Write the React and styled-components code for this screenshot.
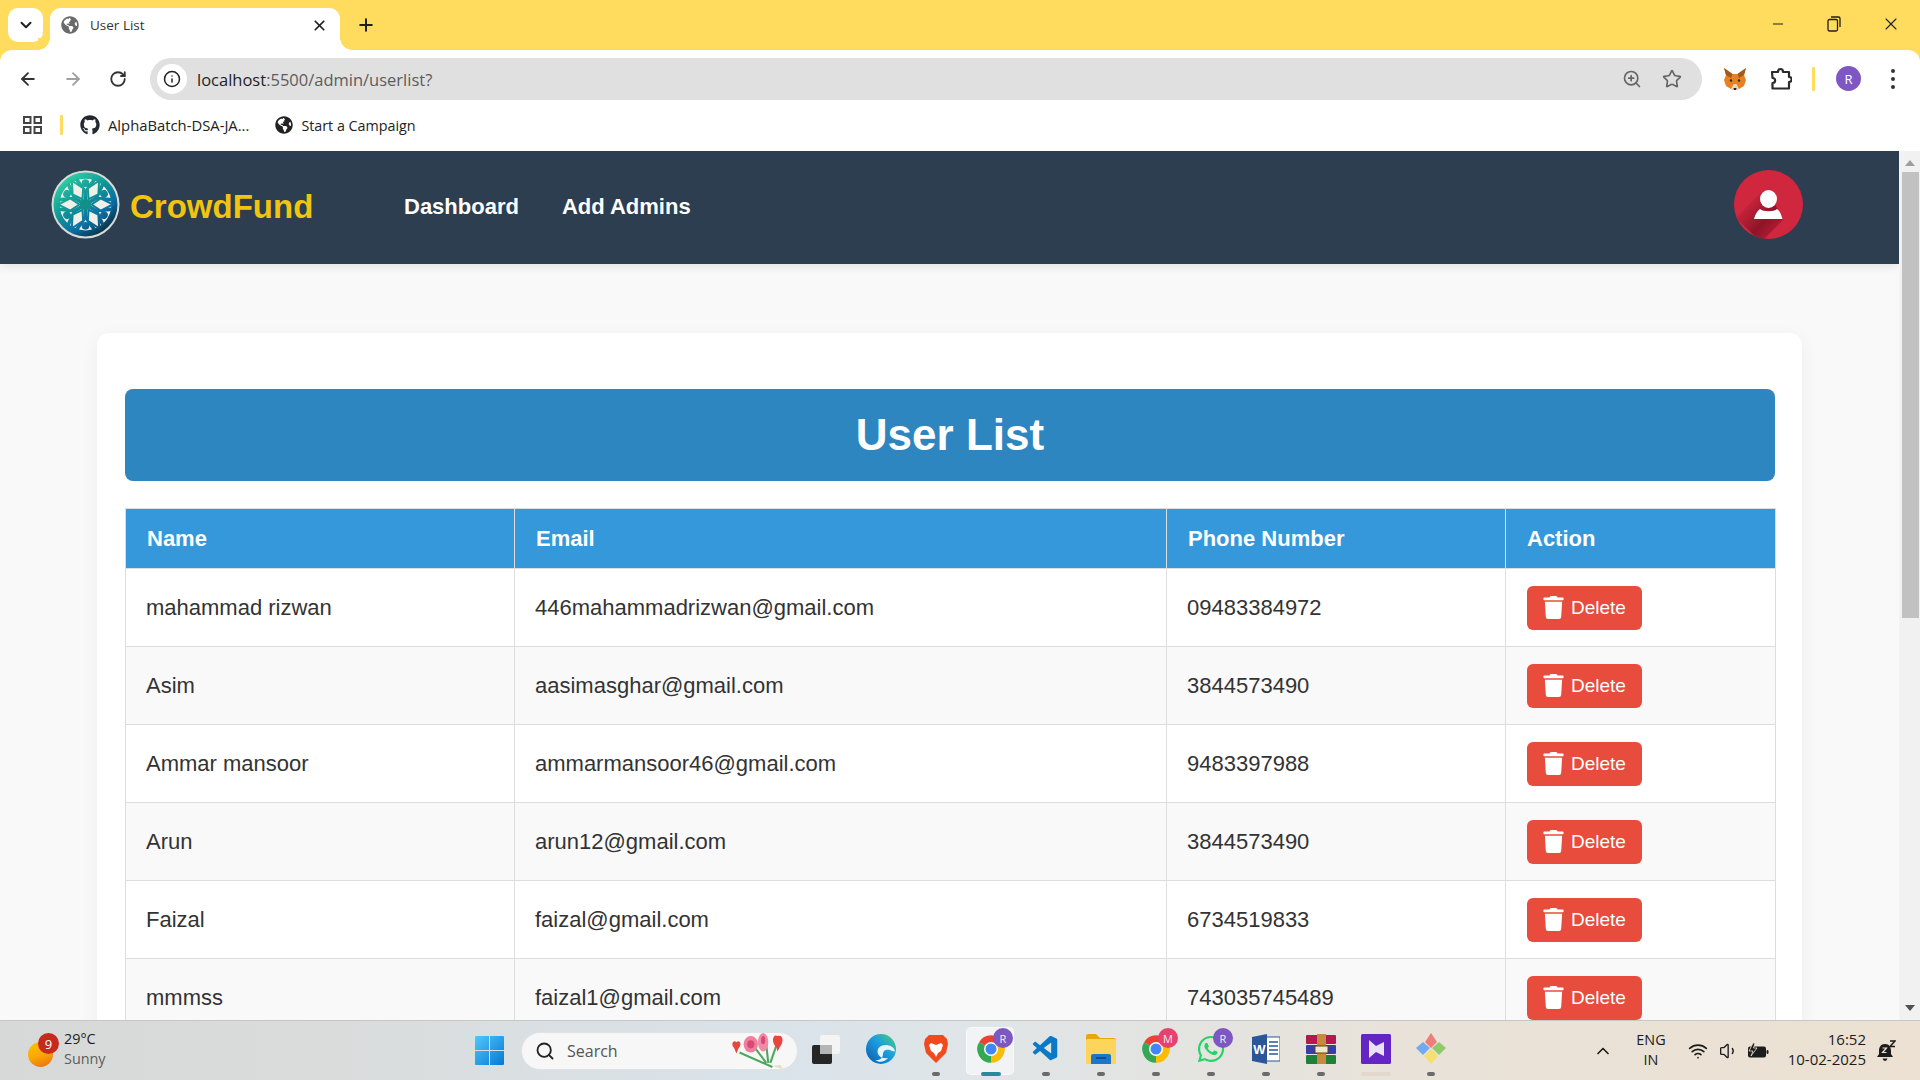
import React from "react";
import styled, { createGlobalStyle } from "styled-components";
import { ArrowLeft, ArrowRight, RotateCw, Info, ZoomIn, Star, X, Plus, ChevronDown, ChevronUp, Minus, Wifi, Volume1, Search } from "lucide-react";
import { FaGithub, FaGlobeAmericas, FaTrash, FaWhatsapp } from "react-icons/fa";
import { VscVscode } from "react-icons/vsc";

const Global = createGlobalStyle`
  html, body { margin: 0; padding: 0; overflow: hidden; background: #f9f9f9; }
  * { box-sizing: border-box; }
`;

const UI_FONT = `"Open Sans", "Noto Sans", sans-serif`;
const WEB_FONT = `"Liberation Sans", Arial, sans-serif`;

const Screen = styled.div`
  width: 1920px; height: 1080px; display: flex; flex-direction: column; overflow: hidden;
  font-family: ${UI_FONT}; background: #ffdc5d;
`;

/* Tab strip */
const TabStrip = styled.div`
  height: 50px; flex: none; display: flex; align-items: flex-start; background: #ffdc5d; padding: 8px 0 0 8px; color: #1f1f1f;
`;
const TabSearch = styled.div`
  width: 35px; height: 34px; background: #fff; border-radius: 10px; display: flex; align-items: center; justify-content: center; margin-right: 7px;
`;
const Tab = styled.div`
  position: relative; width: 290px; height: 42px; background: #fff; border-radius: 11px 11px 0 0; display: flex; align-items: center; padding: 0 12px 8px 11px;
  &::before, &::after { content: ""; position: absolute; bottom: 0; width: 12px; height: 12px; }
  &::before { left: -12px; background: radial-gradient(circle at 0 0, #ffdc5d 11.5px, #fff 12px); }
  &::after { right: -12px; background: radial-gradient(circle at 100% 0, #ffdc5d 11.5px, #fff 12px); }
`;
const TabTitle = styled.span`
  font-size: 13.5px; margin-left: 11px; flex: 1; color: #333; white-space: nowrap;
`;
const NewTab = styled.div`
  width: 30px; height: 34px; margin-left: 11px; display: flex; align-items: center; justify-content: center;
`;
const WindowControls = styled.div`
  margin-left: auto; margin-top: -8px; height: 50px; display: flex; align-items: center; padding-bottom: 2px;
`;
const WinBtn = styled.div`
  width: ${p => p.$w}px; display: flex; justify-content: center; align-items: center;
`;

/* Toolbar */
const Toolbar = styled.div`
  height: 58px; flex: none; background: #fff; border-radius: 12px 12px 0 0; display: flex; align-items: flex-start; padding: 8px 0 0 5px;
`;
const NavBtn = styled.div`
  width: 45px; height: 42px; display: flex; align-items: center; justify-content: center; color: ${p => p.$off ? "#a0a0a0" : "#333"};
`;
const Omnibox = styled.div`
  width: 1552px; height: 42px; margin-left: 10px; border-radius: 21px; background: #e0e0e0; display: flex; align-items: center; padding: 0 18px 0 7px;
`;
const InfoChip = styled.div`
  width: 30px; height: 30px; border-radius: 50%; background: #fff; display: flex; align-items: center; justify-content: center; flex: none;
`;
const Url = styled.div`
  margin-left: 10px; font-size: 16.5px; color: #5c5c5c; flex: 1; white-space: nowrap;
  b { font-weight: 400; color: #1f1f1f; }
`;
const OmniIcon = styled.div`
  width: 24px; margin-left: ${p => p.$ml || 0}px; display: flex; justify-content: center; color: #666;
`;
const ExtBtn = styled.div`
  width: 46px; height: 42px; margin-left: ${p => p.$ml || 0}px; display: flex; align-items: center; justify-content: center;
`;
const YellowSep = styled.div`
  width: 3px; height: ${p => p.$h}px; background: #ffdc5d; border-radius: 1px; margin-left: ${p => p.$ml}px; margin-top: ${p => p.$mt || 0}px; flex: none;
`;
const ProfileDot = styled.div`
  width: 25px; height: 25px; margin: 8px 0 0 21px; border-radius: 50%; background: #7e57c2; color: #fff; font-size: 13px; display: flex; align-items: center; justify-content: center; flex: none;
`;
const Kebab = styled.div`
  width: 24px; margin: 8px 0 0 20px; height: 25px; display: flex; flex-direction: column; align-items: center; justify-content: center; gap: 4px;
  i { width: 4px; height: 4px; border-radius: 50%; background: #333; display: block; }
`;

/* Bookmarks */
const Bookmarks = styled.div`
  height: 43px; flex: none; background: #fff; display: flex; align-items: center; padding: 0 0 9px 23px; color: #1f1f1f;
`;
const Mark = styled.div`
  display: flex; align-items: center; margin-left: ${p => p.$ml}px; gap: 8px; font-size: ${p => p.$fs}px; white-space: nowrap; color: #222;
`;

/* Viewport */
const Viewport = styled.div`
  flex: 1; min-height: 0; display: flex; background: #f9f9f9;
`;
const Page = styled.div`
  flex: 1; min-width: 0; overflow: hidden; font-family: ${WEB_FONT}; color: #333;
`;
const Scrollbar = styled.div`
  width: 21px; flex: none; background: #f1f1f1; padding: 0 2px; display: flex; flex-direction: column; align-items: center; border-left: 1px solid #f5f5f5;
`;
const ScrollArrow = styled.div`
  width: 0; height: 0; border-left: 5px solid transparent; border-right: 5px solid transparent; flex: none;
  ${p => p.$up ? "border-bottom: 6px solid #9e9e9e; margin-top: 9px;" : "border-top: 6px solid #505050; margin-top: auto; margin-bottom: 9px;"}
`;
const ScrollThumb = styled.div`
  width: 17px; height: 446px; background: #c1c1c1; margin-top: 6px; flex: none;
`;

const Nav = styled.nav`
  height: 113px; background: #2c3e50; display: flex; align-items: center; padding: 0 96px 7px 51px; box-shadow: 0 2px 10px rgba(0,0,0,.1);
`;
const Brand = styled.div`
  display: flex; align-items: center; gap: 10px; width: 353px; font-size: 33px; font-weight: 700; color: #f1c40f;
`;
const BrandName = styled.span`
  margin-top: 5px;
`;
const NavLink = styled.a`
  color: #fff; font-weight: 700; font-size: 22px; margin-right: 43px; margin-top: 5px;
`;
const AvatarWrap = styled.div`
  margin-left: auto; width: 69px; height: 69px; flex: none;
`;

const Card = styled.section`
  margin: 69px 97px 0; background: #fff; border-radius: 12px; padding: 56px 27px 0 28px; box-shadow: 0 4px 20px rgba(0,0,0,.05);
`;
const Title = styled.h1`
  margin: 0 0 27px; height: 92px; border-radius: 8px; background: #2e86c1; color: #fff; font-size: 44px; font-weight: 700; display: flex; align-items: center; justify-content: center;
`;
const Table = styled.table`
  width: 1650px; table-layout: fixed; border-collapse: collapse; font-size: 22px;
`;
const Th = styled.th`
  background: #3498db; color: #fff; text-align: left; font-weight: 700; font-size: 22px; height: 60px; padding: 0 20px 0 21px; border: 1px solid #ddd;
`;
const Tr = styled.tr`
  background: ${p => p.$even ? "#f9f9f9" : "#fff"};
`;
const Td = styled.td`
  height: 78px; padding: 0 20px; border: 1px solid #ddd; color: #333;
`;
const DeleteBtn = styled.button`
  width: 115px; height: 44px; margin-left: 1px; border: 0; border-radius: 6px; background: #e74c3c; color: #fff; font: 400 19px ${WEB_FONT}; display: flex; align-items: center; gap: 6px; padding: 0 0 0 15px;
`;

/* Taskbar */
const Taskbar = styled.footer`
  height: 60px; flex: none; display: flex; align-items: center; border-top: 1px solid #c6c6c6; color: #1c1c1c;
  background: linear-gradient(90deg, #d7d9d9 0%, #dadcdc 18%, #d9e3ea 40%, #dfe5e8 50%, #e9e2d8 75%, #ece1d2 100%);
`;
const Weather = styled.div`
  width: 475px; flex: none; padding-left: 28px; display: flex; align-items: center; height: 100%;
`;
const Sun = styled.div`
  position: relative; width: 25px; height: 25px; border-radius: 50%; background: linear-gradient(160deg, #ffc400 0%, #fba806 50%, #e96a12 100%); margin-top: 8px; flex: none;
`;
const SunBadge = styled.span`
  position: absolute; left: 10px; top: -9px; width: 21px; height: 21px; border-radius: 50%; background: #c42b1c; color: #fff; font-size: 13px; display: flex; align-items: center; justify-content: center;
`;
const WeatherText = styled.div`
  margin-left: 11px; font-size: 14.4px; line-height: 20px; padding-bottom: 3px;
  span { display: block; }
  span + span { color: #5d5d5d; }
`;
const StartBtn = styled.div`
  width: 29px; height: 29px; flex: none; margin-right: 17px; display: flex;
`;
const SearchBox = styled.div`
  width: 277px; height: 38px; border-radius: 19px; background: #f7f7f7; border: 1px solid #e2e2e2; flex: none; display: flex; align-items: center; padding: 0 10px 0 13px;
  span { margin-left: 12px; font-size: 16px; color: #555; flex: 1; }
`;
const Pinned = styled.div`
  display: flex; flex: none; align-items: center; height: 100%;
`;
const Pin = styled.div`
  position: relative; width: 55px; height: 100%; display: flex; align-items: center; justify-content: center; padding-bottom: 3px;
  ${p => p.$active && `&::before { content: ""; position: absolute; left: 3px; right: 4px; top: 6px; bottom: 5px; border-radius: 5px; background: rgba(255,255,255,.55); border: 1px solid rgba(255,255,255,.5);} `}
  > * { position: relative; }
`;
const Indicator = styled.i`
  position: absolute !important; left: 50%; bottom: 4px; transform: translateX(-50%); height: 4px; border-radius: 2px;
  width: ${p => p.$w || 8}px; background: ${p => p.$c || "#6a6a6a"};
`;
const Bubble = styled.b`
  position: absolute !important; top: 7px; left: 30px; width: 20px; height: 20px; border-radius: 50%; background: ${p => p.$c}; color: #eee; font: 400 11px ${UI_FONT}; display: flex; align-items: center; justify-content: center;
`;
const Tray = styled.div`
  margin-left: auto; display: flex; align-items: center; padding-right: 24px; height: 100%;
`;
const TrayIcon = styled.div`
  width: ${p => p.$w}px; margin-left: ${p => p.$ml}px; display: flex; justify-content: center; align-items: center; flex: none;
`;
const Lang = styled.div`
  width: 40px; margin-left: 18px; text-align: center; font-size: 14.4px; line-height: 20px; padding-bottom: 2px;
`;
const Clock = styled.div`
  width: 90px; margin-left: 7px; text-align: right; font-size: 15px; line-height: 20px; white-space: nowrap; padding-bottom: 3px;
`;

/* Drawings */
const Logo = () => (
  <svg width="69" height="69" viewBox="0 0 68 68">
    <defs>
      <linearGradient id="lg" x1="0.1" y1="0.05" x2="0.8" y2="1">
        <stop offset="0" stopColor="#2fd2a5" /><stop offset=".45" stopColor="#0f9296" /><stop offset=".7" stopColor="#0b6fa5" /><stop offset="1" stopColor="#0c2f42" />
      </linearGradient>
      <mask id="starMask">
        <rect width="68" height="68" fill="#000" />
        {[0, 60, 120, 180, 240, 300].map(a => (
          <g key={a} transform={`rotate(${a} 34 34)`}>
            <path d="M34 34 L34 22 M34 22 L25 9 M34 22 L43 9" stroke="#fff" strokeWidth="3.6" fill="none" />
            <circle cx="34" cy="13" r="3.8" fill="#fff" />
          </g>
        ))}
        {[30, 90, 150, 210, 270, 330].map(a => (
          <path key={a} transform={`rotate(${a} 34 34)`} d="M34 28 L28 19 L34 7 L40 19 Z" fill="#000" stroke="#fff" strokeWidth="2" />
        ))}
      </mask>
    </defs>
    <circle cx="34" cy="34" r="33.5" fill="#d8dcd8" />
    <circle cx="34" cy="34" r="28.5" fill="#f1f0e8" stroke="url(#lg)" strokeWidth="6" />
    <rect width="68" height="68" fill="url(#lg)" mask="url(#starMask)" />
    <circle cx="34" cy="34" r="5.5" fill="#119088" />
  </svg>
);

const Avatar = () => (
  <svg width="69" height="69" viewBox="0 0 69 69">
    <defs>
      <linearGradient id="sh" x1="0.15" y1="0.2" x2="0.85" y2="0.9">
        <stop offset="0" stopColor="#d0273f" /><stop offset=".6" stopColor="#8f1428" /><stop offset="1" stopColor="#b81d33" />
      </linearGradient>
      <clipPath id="ac"><circle cx="34.5" cy="34.5" r="34.5" /></clipPath>
    </defs>
    <circle cx="34.5" cy="34.5" r="34.5" fill="#d0273f" />
    <path clipPath="url(#ac)" d="M27 22 L2 48 L27 72 L49 50 L42 36 Z" fill="url(#sh)" />
    <ellipse cx="34.5" cy="29" rx="8.5" ry="9" fill="#fff" />
    <path d="M26 39 C29 42 40 42 43 39 C46 41 47 44 48.5 49 L20 49 C21.5 44 23 41 26 39 Z" fill="#fff" />
  </svg>
);

const Fox = () => (
  <svg width="24" height="24" viewBox="0 0 24 24">
    <path d="M1 1 L9.5 7 L14.5 7 L23 1 L21 8 L23 13 L21 19 L16 22 L13.5 23 L10.5 23 L8 22 L3 19 L1 13 L3 8 Z" fill="#e8811f" />
    <path d="M1 1 L9.5 7 L8 11 L3 8 Z M23 1 L14.5 7 L16 11 L21 8 Z" fill="#a35a1b" />
    <path d="M8 22 L10.5 17 L13.5 17 L16 22 L13.5 23 L10.5 23 Z" fill="#e9d5c4" />
    <path d="M10.5 21 L13.5 21 L13 23 L11 23 Z" fill="#222" />
    <circle cx="8" cy="13.5" r="1.2" fill="#2a2a2a" /><circle cx="16" cy="13.5" r="1.2" fill="#2a2a2a" />
  </svg>
);

const PuzzleIcon = () => (
  <svg width="22" height="24" viewBox="0 0 22 24" fill="none" stroke="#2b2b2b" strokeWidth="2.2" strokeLinejoin="round">
    <path d="M2 5 H8 C8 1 13 1 13 5 H19 V10 C22.5 10 22.5 15 19 15 V21.5 H2.5 V16 C6 16 6 11 2.5 11 Z" />
  </svg>
);

const Apps = () => (
  <svg width="19" height="18" viewBox="0 0 19 18" fill="none" stroke="#444" strokeWidth="2">
    <rect x="1" y="1" width="6.5" height="6" /><rect x="11.5" y="1" width="6.5" height="6" />
    <rect x="1" y="11" width="6.5" height="6" /><rect x="11.5" y="11" width="6.5" height="6" />
  </svg>
);

const RestoreIcon = () => (
  <svg width="14" height="16" viewBox="0 0 14 16" fill="none" stroke="#1f1f1f" strokeWidth="1.3">
    <rect x="1" y="3.5" width="9.5" height="11.5" rx="1.5" /><path d="M4 1 H11.5 Q13 1 13 2.5 V11" />
  </svg>
);

const WinLogo = () => (
  <svg width="29" height="29" viewBox="0 0 29 29">
    <defs><linearGradient id="wl" x1="0" y1="0" x2="1" y2="1"><stop offset="0" stopColor="#50c8fa" /><stop offset="1" stopColor="#0678d4" /></linearGradient></defs>
    <path d="M1 0 H14 V14 H0 V1 Q0 0 1 0 Z M15 0 H28 Q29 0 29 1 V14 H15 Z M0 15 H14 V29 H1 Q0 29 0 28 Z M15 15 H29 V28 Q29 29 28 29 H15 Z" fill="url(#wl)" />
  </svg>
);

const Flowers = () => (
  <svg width="58" height="37" viewBox="0 0 56 36">
    <path d="M10 20 L42 34 M24 14 L36 30 M36 12 L38 30 M47 10 L40 30" stroke="#4da65a" strokeWidth="2" fill="none" />
    <path d="M5 16 C1 12 4 7 7 10 C10 7 13 12 9 16 L7 21 Z" fill="#e8453c" />
    <ellipse cx="21" cy="12" rx="7" ry="8" fill="#ef7f9c" /><ellipse cx="21" cy="12" rx="3.5" ry="4" fill="#d84a75" />
    <ellipse cx="33" cy="10" rx="5" ry="9" fill="#f08aa5" /><ellipse cx="33" cy="8" rx="2" ry="4" fill="#d84a75" />
    <path d="M46 15 C40 9 43 1 47 4 C52 2 54 9 49 15 L47 19 Z" fill="#e8453c" />
    <path d="M42 33 L52 36 L50 32 Z" fill="#e8dcc0" />
  </svg>
);

const TaskView = () => (
  <svg width="30" height="30" viewBox="0 0 30 30">
    <rect x="1" y="11" width="20" height="19" rx="2" fill="#262626" />
    <rect x="9" y="1" width="20" height="19" rx="2" fill="#f4f4f4" />
    <rect x="9" y="11" width="12" height="9" fill="#b5b5b5" />
  </svg>
);

const Chrome = () => (
  <svg width="30" height="30" viewBox="0 0 24 24">
    <path d="M12 12 L2.47 6.5 A11 11 0 0 1 21.53 6.5 Z" fill="#ea4335" />
    <path d="M12 12 L21.53 6.5 A11 11 0 0 1 12 23 Z" fill="#fbbc04" />
    <path d="M12 12 L12 23 A11 11 0 0 1 2.47 6.5 Z" fill="#34a853" />
    <circle cx="12" cy="12" r="5.6" fill="#fff" /><circle cx="12" cy="12" r="4.4" fill="#4285f4" />
  </svg>
);

const Edge = () => (
  <svg width="30" height="30" viewBox="0 0 30 30">
    <defs><linearGradient id="eg" x1="0" y1="1" x2="1" y2="0"><stop offset="0" stopColor="#0c59a4" /><stop offset=".55" stopColor="#1b9de2" /><stop offset="1" stopColor="#4fd06e" /></linearGradient></defs>
    <circle cx="15" cy="15" r="15" fill="url(#eg)" />
    <path d="M29 17 C27 10 15 9 12 15 C10 21 15 25 22 24 C19 28 13 29 9 26 C13 27 17 24 17 20 C17 16 21 15 24 16 C26 17 28 18 29 17 Z" fill="#e7f4fa" />
  </svg>
);

const BraveIcon = () => (
  <svg width="26" height="30" viewBox="0 0 26 30">
    <path d="M6 1 H20 L24 5 L25 10 L23 19 L13 29 L3 19 L1 10 L2 5 Z" fill="#f04a1d" />
    <path d="M8 9 L13 11 L18 9 L20 11 L18 17 L15 19 L13 23 L11 19 L8 17 L6 11 Z" fill="#fff" />
  </svg>
);

const Folder = () => (
  <svg width="30" height="30" viewBox="0 0 30 30">
    <path d="M0 2 Q0 0 2 0 H10 L14 4 H28 Q30 4 30 6 V12 H0 Z" fill="#e5a80d" />
    <rect x="0" y="5" width="30" height="25" rx="1.5" fill="#fcd55a" />
    <path d="M5 30 V22 Q5 20 7 20 H23 Q25 20 25 22 V30 Z" fill="#1d76c9" />
    <rect x="10" y="23" width="10" height="2" fill="#0e4f94" />
  </svg>
);

const Word = () => (
  <svg width="28" height="30" viewBox="0 0 28 30">
    <rect x="8" y="3" width="20" height="24" fill="#fff" stroke="#2b579a" />
    <path d="M17 8 H26 M17 12 H26 M17 16 H26 M17 20 H26" stroke="#2b579a" strokeWidth="1.6" />
    <path d="M0 3 L15 0 V30 L0 27 Z" fill="#2b579a" />
    <text x="7.5" y="20" fontSize="13" fontWeight="700" fill="#fff" textAnchor="middle" fontFamily="Liberation Sans">W</text>
  </svg>
);

const WinRar = () => (
  <svg width="30" height="30" viewBox="0 0 30 30">
    <rect x="0" y="1" width="30" height="9" rx="1" fill="#b7174e" />
    <rect x="0" y="11" width="30" height="9" rx="1" fill="#3a3ca8" />
    <rect x="0" y="21" width="30" height="9" rx="1" fill="#1f8137" />
    <rect x="11" y="0" width="9" height="30" fill="#c68a3c" />
    <rect x="9" y="12" width="13" height="7" fill="#f3e5c8" stroke="#5e4320" />
  </svg>
);

const PurpleApp = () => (
  <svg width="30" height="30" viewBox="0 0 30 30">
    <rect width="30" height="30" rx="1.5" fill="#6425c5" />
    <path d="M8 6 L15 12 V18 L8 24 Z M15 12 L23 8 V22 L15 18 Z" fill="#e9e2f6" />
  </svg>
);

const Gem = () => (
  <svg width="32" height="32" viewBox="0 0 32 32">
    <path d="M16 0 L22 9 L16 15 L10 9 Z" fill="#ee7f78" />
    <path d="M8 9 L15 15 L8 22 L1 15 Z" fill="#72a9f0" />
    <path d="M24 9 L31 15 L24 22 L17 15 Z" fill="#8fcb6a" />
    <path d="M16 16 L23 23 L16 31 L9 23 Z" fill="#f5de72" />
  </svg>
);

const Battery = () => (
  <svg width="22" height="16" viewBox="0 0 22 16">
    <rect x="1" y="3.5" width="18" height="11" rx="2" fill="#1c1c1c" />
    <rect x="19.5" y="7" width="2" height="4" rx="1" fill="#1c1c1c" />
    <path d="M6 0 L2 8 H6 L4 13 L10 5 H6.5 L8 0 Z" fill="#1c1c1c" stroke="#ece1d2" strokeWidth=".8" />
  </svg>
);

const SnoozeBell = () => (
  <svg width="20" height="22" viewBox="0 0 20 22">
    <path d="M9 4 C4.5 4 3 7.5 3 11 V14 L1 17 H17 L15 14 V11 C15 7.5 13.5 4 9 4 Z" fill="#1c1c1c" />
    <path d="M6.5 18.5 H11.5 Q10.5 21 9 21 Q7.5 21 6.5 18.5 Z" fill="#1c1c1c" />
    <path d="M6.5 8 H10.5 L6.5 12.5 H10.5" stroke="#ece1d2" strokeWidth="1.2" fill="none" />
    <path d="M14 1 H19 L14 6.5 H19" stroke="#1c1c1c" strokeWidth="1.5" fill="none" />
  </svg>
);

const users = [
  ["mahammad rizwan", "446mahammadrizwan@gmail.com", "09483384972"],
  ["Asim", "aasimasghar@gmail.com", "3844573490"],
  ["Ammar mansoor", "ammarmansoor46@gmail.com", "9483397988"],
  ["Arun", "arun12@gmail.com", "3844573490"],
  ["Faizal", "faizal@gmail.com", "6734519833"],
  ["mmmss", "faizal1@gmail.com", "743035745489"],
];

export default function App() {
  return (
    <Screen>
      <Global />
      <TabStrip>
        <TabSearch><ChevronDown size={18} strokeWidth={2.6} /></TabSearch>
        <Tab>
          <FaGlobeAmericas size={18} color="#6b6b6b" />
          <TabTitle>User List</TabTitle>
          <X size={17} strokeWidth={2.4} />
        </Tab>
        <NewTab><Plus size={20} strokeWidth={2.4} /></NewTab>
        <WindowControls>
          <WinBtn $w={56}><Minus size={16} strokeWidth={1.5} /></WinBtn>
          <WinBtn $w={56}><RestoreIcon /></WinBtn>
          <WinBtn $w={58}><X size={20} strokeWidth={1.3} /></WinBtn>
        </WindowControls>
      </TabStrip>
      <Toolbar>
        <NavBtn><ArrowLeft size={20} strokeWidth={2.2} /></NavBtn>
        <NavBtn $off><ArrowRight size={20} strokeWidth={2.2} /></NavBtn>
        <NavBtn><RotateCw size={18} strokeWidth={2.4} /></NavBtn>
        <Omnibox>
          <InfoChip><Info size={18} strokeWidth={2} color="#222" /></InfoChip>
          <Url><b>localhost</b>:5500/admin/userlist?</Url>
          <OmniIcon><ZoomIn size={20} strokeWidth={2} /></OmniIcon>
          <OmniIcon $ml={16}><Star size={20} strokeWidth={2} /></OmniIcon>
        </Omnibox>
        <ExtBtn $ml={10}><Fox /></ExtBtn>
        <ExtBtn><PuzzleIcon /></ExtBtn>
        <YellowSep $h={24} $ml={8} $mt={9} />
        <ProfileDot>R</ProfileDot>
        <Kebab><i /><i /><i /></Kebab>
      </Toolbar>
      <Bookmarks>
        <Apps />
        <YellowSep $h={20} $ml={18} />
        <Mark $ml={17} $fs={14.8}><FaGithub size={20} color="#24292f" />AlphaBatch-DSA-JA...</Mark>
        <Mark $ml={26} $fs={14.3}><FaGlobeAmericas size={18} color="#222" />Start a Campaign</Mark>
      </Bookmarks>
      <Viewport>
        <Page>
          <Nav>
            <Brand><Logo /><BrandName>CrowdFund</BrandName></Brand>
            <NavLink>Dashboard</NavLink>
            <NavLink>Add Admins</NavLink>
            <AvatarWrap><Avatar /></AvatarWrap>
          </Nav>
          <Card>
            <Title>User List</Title>
            <Table>
              <colgroup>
                <col style={{ width: 389 }} /><col style={{ width: 652 }} /><col style={{ width: 339 }} /><col style={{ width: 270 }} />
              </colgroup>
              <thead>
                <tr><Th>Name</Th><Th>Email</Th><Th>Phone Number</Th><Th>Action</Th></tr>
              </thead>
              <tbody>
                {users.map((u, i) => (
                  <Tr key={u[1]} $even={i % 2 === 1}>
                    <Td>{u[0]}</Td><Td>{u[1]}</Td><Td>{u[2]}</Td>
                    <Td><DeleteBtn><FaTrash size={23} />Delete</DeleteBtn></Td>
                  </Tr>
                ))}
              </tbody>
            </Table>
          </Card>
        </Page>
        <Scrollbar>
          <ScrollArrow $up />
          <ScrollThumb />
          <ScrollArrow />
        </Scrollbar>
      </Viewport>
      <Taskbar>
        <Weather>
          <Sun><SunBadge>9</SunBadge></Sun>
          <WeatherText><span>29°C</span><span>Sunny</span></WeatherText>
        </Weather>
        <StartBtn><WinLogo /></StartBtn>
        <SearchBox>
          <Search size={20} strokeWidth={2.2} color="#222" />
          <span>Search</span>
          <Flowers />
        </SearchBox>
        <Pinned>
          <Pin><TaskView /></Pin>
          <Pin><Edge /></Pin>
          <Pin><BraveIcon /><Indicator /></Pin>
          <Pin $active><Chrome /><Bubble $c="#7e57c2">R</Bubble><Indicator $w={20} $c="#2a8a9c" /></Pin>
          <Pin><VscVscode size={30} color="#0a7ac7" /><Indicator /></Pin>
          <Pin><Folder /><Indicator /></Pin>
          <Pin><Chrome /><Bubble $c="#e8406f">M</Bubble><Indicator /></Pin>
          <Pin><FaWhatsapp size={30} color="#25d366" /><Bubble $c="#7e57c2">R</Bubble><Indicator /></Pin>
          <Pin><Word /><Indicator /></Pin>
          <Pin><WinRar /><Indicator /></Pin>
          <Pin><PurpleApp /><Indicator $w={30} $c="#e2d8cc" /></Pin>
          <Pin><Gem /><Indicator /></Pin>
        </Pinned>
        <Tray>
          <TrayIcon $w={20} $ml={0}><ChevronUp size={20} strokeWidth={2} /></TrayIcon>
          <Lang>ENG<br />IN</Lang>
          <TrayIcon $w={20} $ml={17}><Wifi size={20} strokeWidth={2} /></TrayIcon>
          <TrayIcon $w={20} $ml={11}><Volume1 size={20} strokeWidth={1.6} /></TrayIcon>
          <TrayIcon $w={22} $ml={8}><Battery /></TrayIcon>
          <Clock>16:52<br />10-02-2025</Clock>
          <TrayIcon $w={20} $ml={10}><SnoozeBell /></TrayIcon>
        </Tray>
      </Taskbar>
    </Screen>
  );
}
